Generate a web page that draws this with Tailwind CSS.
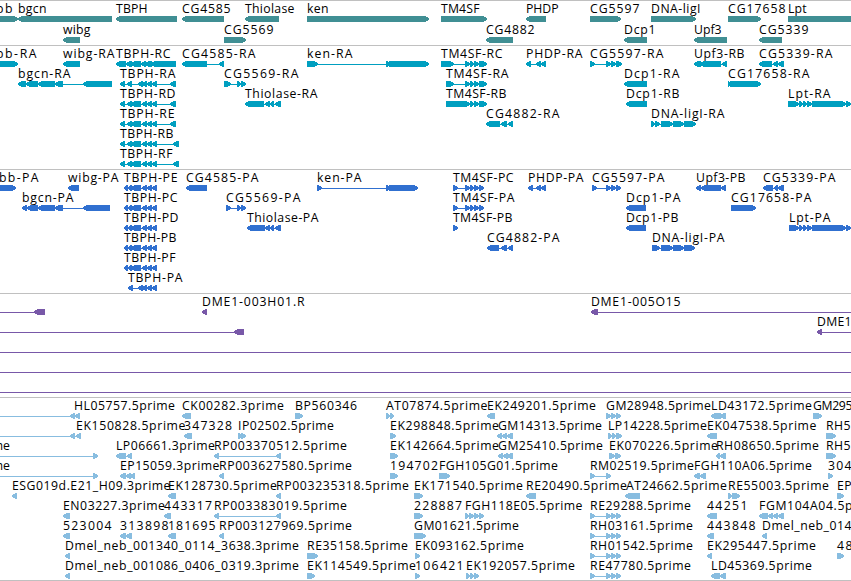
<!DOCTYPE html>
<html lang="en">
<head>
    <meta charset="UTF-8">
    <meta name="viewport" content="width=device-width, initial-scale=1.0">
    <title>Genome Browser</title>
    <script src="https://cdn.jsdelivr.net/npm/@tailwindcss/browser@4"></script>
</head>
<body class="bg-white overflow-hidden">
    <main id="tracks" class="flex flex-col w-[851px] h-[581px] border-b border-[#c0c0c0] overflow-hidden"></main>

    <script>
        // feature: row | label | label start | label end | strand | exons
        const tracks = [
            {
                name: 'Genes', style: 'h-[45px] text-[#408f94]', pitch: 21,
                features: `
0|bb|-4|12|>|-10:18
0|bgcn|18|46|<|18:112
0|TBPH|116|147|<|116:177
0|CG4585|182|230|<|182:224
0|Thiolase|245|294|<|245:279
0|ken|307|328|>|307:429
0|TM4SF|441|479|>|441:487
0|PHDP|526|558|<|526:546
0|CG5597|590|639|>|590:621
0|DNA-ligI|651|700|>|651:696
0|CG17658|728|785|>|728:761
0|Lpt|788|806|>|788:870
1|wibg|63|90|<|63:80
1|CG5569|224|273|>|224:246
1|CG4882|486|534|<|486:513
1|Dcp1|624|655|<|624:647
1|Upf3|694|721|<|694:727
1|CG5339|759|808|<|759:782`
            },
            {
                name: 'Transcripts', style: 'h-[124px] text-[#009fc0]', pitch: 20,
                features: `
0|bb-RA|-4|36|>|-10:18
0|wibg-RA|63|114|<|63:80
0|TBPH-RC|116|170|<|116:126 126:132 131:141 141:146 145:152 151:176
0|CG4585-RA|182|255|<|182:207 219:224
0|ken-RA|307|352|>|307:318 386:389 389:429
0|TM4SF-RC|441|502|>|441:454 465:470 470:474 474:479 479:487
0|PHDP-RA|526|582|<|526:531 536:541 541:546
0|CG5597-RA|590|663|>|590:595 606:611 611:616 616:622
0|Upf3-RB|694|744|<|694:701 700:721 722:727
0|CG5339-RA|759|832|<|759:772 773:778 778:784
1|bgcn-RA|18|70|<|18:26 26:38 38:55 55:63 83:112
1|TBPH-RA|120|175|<|120:125 127:132 138:143 142:147 147:152 152:157 170:176
1|CG5569-RA|224|298|>|224:231 237:241 241:246
1|TM4SF-RA|446|508|>|446:454 465:470 470:474 474:479 479:487
1|Dcp1-RA|624|679|<|624:647
1|CG17658-RA|728|809|>|728:730 730:761
2|TBPH-RD|120|175|<|120:125 127:132 131:141 142:147 147:152 152:157 170:176
2|Thiolase-RA|245|317|<|245:264 265:270 270:274 275:281
2|TM4SF-RB|446|506|>|446:470 470:474 474:479 479:487
2|Dcp1-RB|626|679|<|626:647
2|Lpt-RA|788|830|>|788:799 799:803 803:807 807:812 812:846 846:851 851:858
3|TBPH-RE|120|174|<|120:125 127:132 131:141 142:147 147:152 152:157 170:176
3|CG4882-RA|486|559|<|486:500 501:507 508:513
3|DNA-ligI-RA|651|724|>|651:655 655:660 661:673 673:684 684:696
4|TBPH-RB|120|173|<|120:125 127:132 131:141 142:147 147:152 152:157 173:179
5|TBPH-RF|120|172|<|120:125 127:132 131:141 142:147 147:152 152:157 173:179`
            },
            {
                name: 'Proteins', style: 'h-[124px] text-[#3070d0]', pitch: 20,
                features: `
0|bb-PA|-1|38|>|-10:16
0|wibg-PA|68|118|<|68:79
0|TBPH-PE|124|177|<|124:128 128:132 131:141 142:147 147:152 152:157
0|CG4585-PA|186|258|<|186:207
0|ken-PA|317|361|>|317:322 386:389 389:418
0|TM4SF-PC|453|513|>|453:458 465:470 470:474 474:479 479:484
0|PHDP-PA|528|583|<|528:533 536:541 541:546
0|CG5597-PA|592|664|>|592:597 606:611 611:616 616:621
0|Upf3-PB|696|745|<|696:701 701:721 721:726
0|CG5339-PA|763|835|<|763:773 774:778 778:784
1|bgcn-PA|22|73|<|22:27 27:38 38:55 55:63 83:110
1|TBPH-PC|124|177|<|124:128 128:132 131:141 142:147 147:152 152:157
1|CG5569-PA|226|300|>|226:231 237:241 241:246
1|TM4SF-PA|453|514|>|453:458 465:470 470:474 474:479 479:484
1|Dcp1-PA|626|680|<|626:646
1|CG17658-PA|731|811|>|731:756
2|TBPH-PD|124|178|<|124:128 128:132 131:141 142:147 147:152 152:157
2|Thiolase-PA|247|318|<|247:265 265:270 270:274 275:281
2|TM4SF-PB|453|512|>|453:458
2|Dcp1-PB|626|678|<|626:646
2|Lpt-PA|789|830|>|789:799 799:803 803:807 807:812 812:846 846:851 851:858
3|TBPH-PB|124|176|<|124:128 128:132 131:141 142:147 147:152 152:157
3|CG4882-PA|487|559|<|487:499 501:507 508:513
3|DNA-ligI-PA|652|724|>|652:660 661:673 673:684 684:695
4|TBPH-PF|124|175|<|124:128 128:132 131:141 142:147 147:152 152:157
5|TBPH-PA|128|182|<|128:133 138:143 142:147 147:152 152:157`
            },
            {
                name: 'BAC ends', style: 'h-[104px] text-[#7858a8]', pitch: 20,
                features: `
0||0|0|<|-10:-10 34:45
0|DME1-003H01.R|202|304|<|202:207
0|DME1-005O15|591|680|<|591:598 860:860
1||0|0|<|-10:-10 234:244
1|DME1|817|851|<|817:822 860:860
2||0|0|<|-10:-10 860:860
3||0|0|<|-10:-10 860:860
4||0|0|<|-10:-10 860:860`
            },
            {
                name: 'ESTs', style: 'h-[183px] text-[#88bde0]', pitch: 20,
                features: `
0|HL05757.5prime|74|174.5|<|-10:-10 70:75 75:80
0|CK00282.3prime|182|283.5|<|182:191
0|BP560346|295|356.5|>|295:303
0|AT07874.5prime|386|487|>|386:390 390:394
0|EK249201.5prime|487|595.5|<|487:495
0|GM28948.5prime|606|710.5|>|606:611 611:616 616:621
0|LD43172.5prime|711|811.5|<|711:721 720:726
0|GM295|813|852|>|813:822
1|EK150828.5prime|76|185|<|-10:-10 70:75 76:81
1|347328|184|231.5|<|184:192
1|IP02502.5prime|238|333.5|>|238:242 241:246
1|EK298848.5prime|390|498.5|>|390:396
1|GM14313.5prime|498|601.5|<|497:502 502:507 507:513
1|LP14228.5prime|608|706.5|>|608:612 612:616 616:622
1|EK047538.5prime|707|816|<|707:717
1|RH5|826|850|>|826:836
2|prime|-24|9.5|>|-10:-10 93:98
2|LP06661.3prime|116|214.5|<|116:126 127:132
2|RP003370512.5prime|214|346.5|<|214:219 276:281
2|EK142664.5prime|390|498.5|>|390:398
2|GM25410.5prime|498|602.5|<|498:503 503:508 507:513
2|EK070226.5prime|609|717.5|>|609:615 615:621
2|RH08650.5prime|716|818.5|<|716:720 720:726
2|RH5|826|850|>|826:836
3|prime|-24|9.5|>|-10:-10 93:98
3|EP15059.3prime|120|219|<|120:126 126:131 130:135
3|RP003627580.5prime|219|351.5|<|219:224
3|194702|390|437.5|>|390:398
3|FGH105G01.5prime|439|557.5|>|439:450
3|RM02519.5prime|590|693.5|>|590:595 606:611
3|FGH110A06.5prime|694|811.5|<|694:700 700:706
3|304|828|851|>|828:833
4|ESG019d.E21_H09.3prime|12|170|<|12:17
4|EK128730.5prime|168|276.5|<|168:176
4|RP003235318.5prime|276|408.5|<|276:281
4|EK171540.5prime|414|522.5|>|414:423
4|RE20490.5prime|526|626.5|<|526:536
4|AT24662.5prime|626|726.5|<|625:640
4|RE55003.5prime|728|828.5|>|728:732 732:740
4|EP|837|851|>|837:844
5|EN03227.3prime|63|164.5|<|63:70
5|443317|164|211.5|<|164:171
5|RP003383019.5prime|214|346.5|<|214:219 276:281
5|228887|414|461.5|>|414:423
5|FGH118E05.5prime|465|582|>|465:469 469:474 474:479 479:484
5|RE29288.5prime|590|690.5|>|590:595 606:611 611:616 616:621
5|44251|707|747|<|707:717
5|FGM104A04.5p|759|852|<|759:768 768:773 773:778 778:784
6|523004|63|111|<|63:70
6|313898|120|168|<|120:126 126:132
6|181695|168|215|<|168:176
6|RP003127969.5prime|219|351.5|<|219:224
6|GM01621.5prime|414|518.5|>|414:426
6|RH03161.5prime|590|692.5|>|590:595 606:611 611:616 616:621
6|443848|707|755|<|707:714
6|Dmel_neb_014|762|851|<|762:767
7|Dmel_neb_001340_0114_3638.3prime|65|298.5|<|65:70
7|RE35158.5prime|307|407.5|>|307:318
7|EK093162.5prime|415|523.5|>|415:420
7|RH01542.5prime|590|692.5|>|590:595 606:611 611:616 616:621
7|EK295447.5prime|707|815.5|<|707:712
7|48|837|852|>|837:844
8|Dmel_neb_001086_0406_0319.3prime|65|298.5|<|65:70
8|EK114549.5prime|307|415.5|>|307:315
8|106421|415|463|>|415:420
8|EK192057.5prime|466|574.5|>|466:470 470:474 474:479
8|RE47780.5prime|590|690.5|>|590:595 606:611 611:616 616:621
8|LD45369.5prime|711|811.5|<|711:720 720:726`
            }
        ];

        // block with a blunt arrow head of at most 5px on the strand's side
        function exon(a, b, strand, y) {
            if (a === b) return '';
            const head = Math.min(5, b - a) - 1;
            const [tip, neck, tail] = strand === '<' ? [a, a + head, b] : [b, b - head, a];
            return `<polygon points="${tip},${y + 2} ${neck},${y} ${tail},${y} ${tail},${y + 6} ${neck},${y + 6} ${tip},${y + 4}"/>`;
        }

        function drawFeature(line, pitch) {
            const [row, label, x, end, strand, blocks] = line.split('|');
            const top = row * pitch;
            const y = top + 15;
            const exons = blocks.split(' ').map(e => e.split(':').map(Number));
            const from = exons[0][0];
            const to = exons[exons.length - 1][1];
            let out = '';
            if (exons.length > 1) {
                out += `<rect x="${from}" y="${y + 3}" width="${to - from}" height="1"/>`;
            }
            out += exons.map(([a, b]) => exon(a, b, strand, y)).join('');
            if (label) {
                out += `<text class="fill-black" x="${x}" y="${top + 12}" textLength="${end - x + 0.5}">${label}</text>`;
            }
            return out;
        }

        document.getElementById('tracks').innerHTML = tracks.map(t => `
            <section class="shrink-0 border-t border-[#c0c0c0] ${t.style}" aria-label="${t.name}">
                <svg class="block w-full h-full fill-current font-['Open_Sans',sans-serif] text-[12.25px]" shape-rendering="crispEdges">
                    ${t.features.trim().split('\n').map(f => drawFeature(f, t.pitch)).join('')}
                </svg>
            </section>`).join('');
    </script>
</body>
</html>
